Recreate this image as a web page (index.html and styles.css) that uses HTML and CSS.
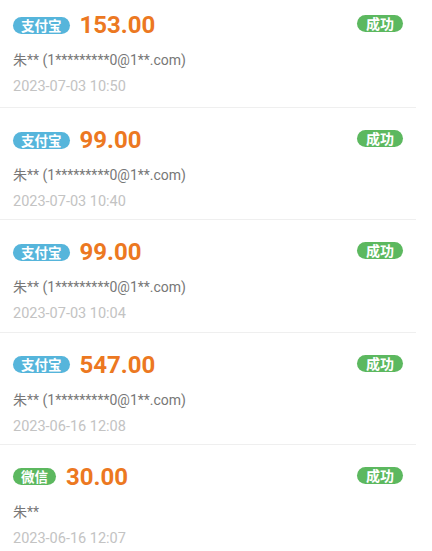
FILE: index.html
```html
<!DOCTYPE html>
<html lang="zh">
<head>
<meta charset="utf-8">
<link rel="stylesheet" href="styles.css">
</head>
<body>
<div class="list">
  <div class="item">
    <div class="top">
      <span class="chan alipay">支付宝</span>
      <span class="amount">153.00</span>
      <span class="status">成功</span>
    </div>
    <div class="name">朱** (1*********0@1**.com)</div>
    <div class="date">2023-07-03 10:50</div>
  </div>
  <div class="item">
    <div class="top">
      <span class="chan alipay">支付宝</span>
      <span class="amount">99.00</span>
      <span class="status">成功</span>
    </div>
    <div class="name">朱** (1*********0@1**.com)</div>
    <div class="date">2023-07-03 10:40</div>
  </div>
  <div class="item">
    <div class="top">
      <span class="chan alipay">支付宝</span>
      <span class="amount">99.00</span>
      <span class="status">成功</span>
    </div>
    <div class="name">朱** (1*********0@1**.com)</div>
    <div class="date">2023-07-03 10:04</div>
  </div>
  <div class="item">
    <div class="top">
      <span class="chan alipay">支付宝</span>
      <span class="amount">547.00</span>
      <span class="status">成功</span>
    </div>
    <div class="name">朱** (1*********0@1**.com)</div>
    <div class="date">2023-06-16 12:08</div>
  </div>
  <div class="item">
    <div class="top">
      <span class="chan wechat">微信</span>
      <span class="amount">30.00</span>
      <span class="status">成功</span>
    </div>
    <div class="name">朱**</div>
    <div class="date">2023-06-16 12:07</div>
  </div>
</div>
</body>
</html>
```

FILE: styles.css
```css
html, body {
  margin: 0;
  padding: 0;
  background: #ffffff;
}
body {
  font-family: Roboto, "Noto Sans CJK SC", sans-serif;
  overflow: hidden;
}
.list {
  display: flex;
  flex-direction: column;
}
.item {
  box-sizing: border-box;
  height: 112.33px;
  margin-right: 16px;
  padding: 20px 13px 0 13px;
  border-bottom: 1px solid #efefef;
}
.item:first-child {
  height: 108px;
  padding-top: 13px;
}
.top {
  display: flex;
  align-items: center;
  height: 24px;
}
.chan {
  display: inline-flex;
  align-items: center;
  height: 17px;
  padding: 0 8px;
  border-radius: 9px;
  color: #ffffff;
  font-family: "Noto Sans CJK SC", sans-serif;
  font-weight: 700;
  font-size: 13.5px;
  line-height: 17px;
}
.alipay { background: #56b5db; }
.wechat { background: #5cb85f; }
.amount {
  margin-left: 10px;
  color: #ec7821;
  font-family: Roboto, sans-serif;
  font-weight: 700;
  font-size: 24px;
  line-height: 24px;
}
.status {
  margin-left: auto;
  align-self: flex-start;
  margin-top: 2px;
  display: inline-flex;
  align-items: center;
  height: 17px;
  padding: 0 9px;
  border-radius: 9px;
  background: #5cb85f;
  color: #ffffff;
  font-family: "Noto Sans CJK SC", sans-serif;
  font-weight: 700;
  font-size: 14px;
  line-height: 17px;
}
.name {
  margin-top: 12px;
  height: 22px;
  line-height: 22px;
  color: #777777;
  font-size: 14px;
}
.date {
  margin-top: 5px;
  height: 22px;
  line-height: 22px;
  color: #c3c3c3;
  font-size: 14.5px;
}
```
